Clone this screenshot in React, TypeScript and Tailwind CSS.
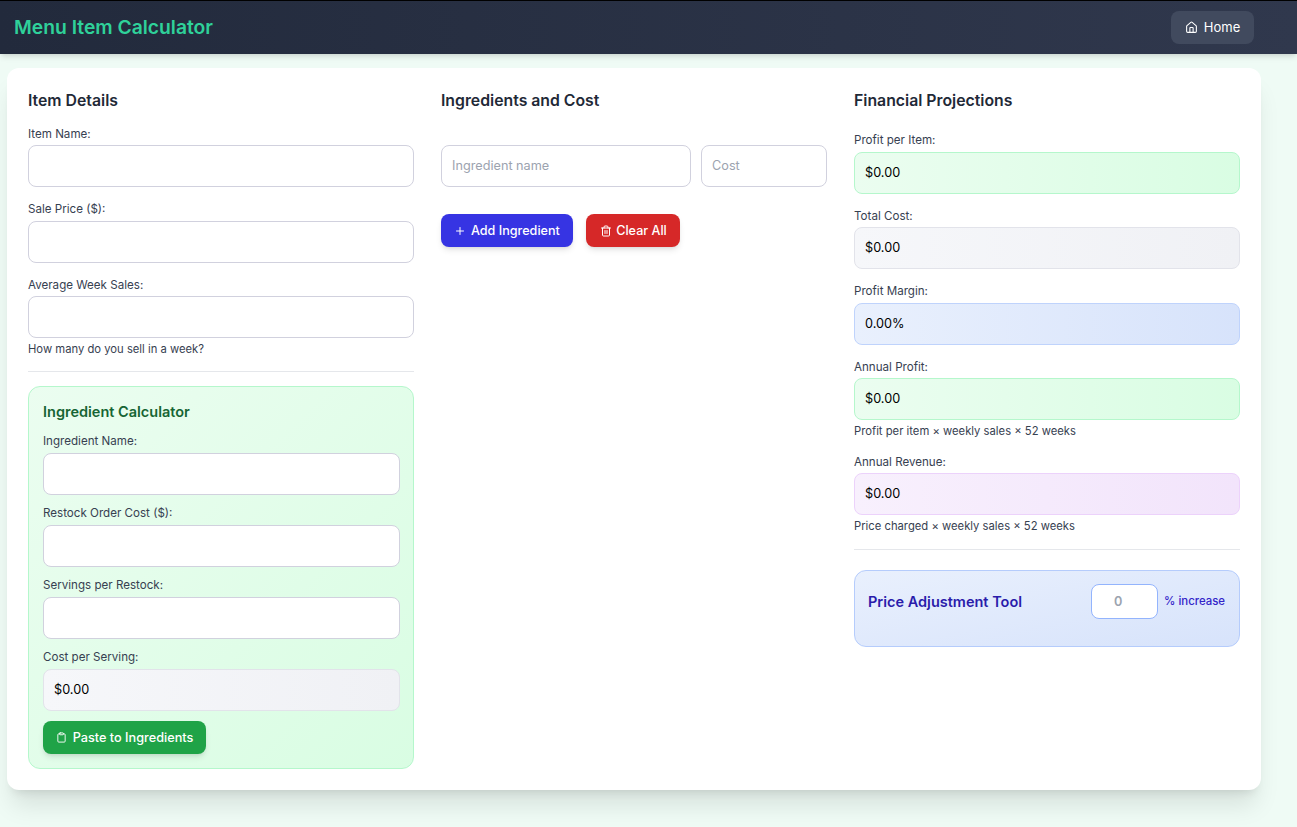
import { Clipboard, House, Plus, Trash2 } from "lucide-react";

const inputClass =
  "block w-full h-[42px] rounded-lg border border-[#d1d1de] bg-white px-[10px] pb-px text-[12.7px] text-black placeholder:text-[#9ca3af] outline-none";

function Field({ label, hint }: { label: string; hint?: string }) {
  return (
    <div>
      <label className="block h-[21.5px] text-[11.6px] leading-[21px] text-[#374151]">
        {label}
      </label>
      <input className={inputClass} />
      {hint && (
        <p className="mt-[2px] text-[11.25px] leading-[18px] text-[#374151]">{hint}</p>
      )}
    </div>
  );
}

function CalcField({ label }: { label: string }) {
  return (
    <div>
      <label className="block h-[21px] text-[11.6px] leading-[19px] text-[#374151]">
        {label}
      </label>
      <input className={inputClass} />
    </div>
  );
}

function Result({
  label,
  value,
  hint,
  boxClass,
}: {
  label: string;
  value: string;
  hint?: string;
  boxClass: string;
}) {
  return (
    <div>
      <div className="h-[21.5px] text-[11.6px] leading-[21px] text-[#374151]">
        {label}
      </div>
      <div
        className={`flex h-[42px] items-center rounded-lg border px-[10px] text-[12.7px] text-black bg-linear-to-r ${boxClass}`}
      >
        {value}
      </div>
      {hint && (
        <p className="mt-[2px] h-[17.5px] text-[11.25px] leading-[19.5px] text-[#374151]">{hint}</p>
      )}
    </div>
  );
}

export default function App() {
  return (
    <div className="min-h-[827px] bg-[#effbf5] font-[Inter,sans-serif]">
      <header className="flex h-[54px] items-center justify-between border-t border-black bg-linear-to-r from-[#222a3c] to-[#30384d] pl-[14px] pr-[43px] shadow-md">
        <h1 className="text-[19.3px] font-semibold text-[#2fd19a]">
          Menu Item Calculator
        </h1>
        <button className="flex h-[33px] w-[83px] items-center justify-center gap-[6px] rounded-lg bg-[#414a5e] text-[13px] text-white">
          <House size={13} />
          Home
        </button>
      </header>

      <main className="pl-[7px] pt-[14px] pb-[37px]">
        <div className="grid h-[722px] w-[1254px] grid-cols-3 gap-x-[27px] rounded-xl bg-white px-[21px] pt-[21px] shadow-xl">
          <section>
            <h2 className="h-[22px] mb-[12.5px] text-[15.8px] font-semibold leading-[24px] text-[#1f2937]">
              Item Details
            </h2>
            <div className="flex flex-col gap-3">
              <Field label="Item Name:" />
              <Field label="Sale Price ($):" />
              <Field label="Average Week Sales:" hint="How many do you sell in a week?" />
            </div>
            <hr className="mt-[12.5px] mb-[14px] border-[#e5e7eb]" />
            <div className="h-[383px] rounded-xl border border-[#b5f7cc] bg-linear-to-br from-[#ebfdf0] to-[#d9fde3] pl-[14px] pr-[13px] pt-[14px]">
              <h3 className="mb-[9px] text-[14.5px] font-semibold leading-[22px] text-[#166534]">
                Ingredient Calculator
              </h3>
              <div className="flex flex-col gap-[9px]">
                <CalcField label="Ingredient Name:" />
                <CalcField label="Restock Order Cost ($):" />
                <CalcField label="Servings per Restock:" />
                <div>
                  <div className="h-[21px] text-[11.6px] leading-[19px] text-[#374151]">
                    Cost per Serving:
                  </div>
                  <div className="flex h-[42px] items-center rounded-lg border border-[#e2e3ea] bg-linear-to-r from-[#f6f7fa] to-[#f0f1f5] px-[10px] text-[12.7px] text-black">
                    $0.00
                  </div>
                </div>
              </div>
              <button className="mt-[10px] flex h-[33px] w-[163px] items-center justify-center gap-[6px] rounded-lg bg-[#1fa347] pt-px text-[12.7px] font-medium text-white shadow-md">
                <Clipboard size={11} />
                Paste to Ingredients
              </button>
            </div>
          </section>

          <section>
            <h2 className="h-[22px] text-[15.8px] font-semibold leading-[24px] text-[#1f2937]">
              Ingredients and Cost
            </h2>
            <div className="mt-[34px] flex gap-[10px]">
              <input placeholder="Ingredient name" className={`${inputClass} !w-[250px]`} />
              <input placeholder="Cost" className={`${inputClass} !w-[126px]`} />
            </div>
            <div className="mt-[27px] flex gap-[13px]">
              <button className="flex h-[33px] w-[132px] items-center gap-[5px] rounded-lg bg-[#3634e3] pl-[13px] pt-px text-[12.6px] font-medium text-white shadow-md">
                <Plus size={12} />
                Add Ingredient
              </button>
              <button className="flex h-[33px] w-[94px] items-center justify-center gap-[4px] rounded-lg bg-[#d62828] pl-px pt-px text-[12.6px] font-medium text-white shadow-md">
                <Trash2 size={12} />
                Clear All
              </button>
            </div>
          </section>

          <section>
            <h2 className="h-[22px] mb-[19px] text-[15.8px] font-semibold leading-[24px] text-[#1f2937]">
              Financial Projections
            </h2>
            <div className="flex flex-col gap-3">
              <Result label="Profit per Item:" value="$0.00" boxClass="border-[#b5f7cc] from-[#ebfdf0] to-[#d9fde3]" />
              <Result label="Total Cost:" value="$0.00" boxClass="border-[#e2e3ea] from-[#f6f7fa] to-[#f0f1f5]" />
              <Result label="Profit Margin:" value="0.00%" boxClass="border-[#bfd3fc] from-[#e9f0fd] to-[#d7e3fb]" />
              <Result label="Annual Profit:" value="$0.00" hint="Profit per item × weekly sales × 52 weeks" boxClass="border-[#b5f7cc] from-[#ebfdf0] to-[#d9fde3]" />
              <Result label="Annual Revenue:" value="$0.00" hint="Price charged × weekly sales × 52 weeks" boxClass="border-[#ecd2fb] from-[#f8f0fd] to-[#f2e4fb]" />
            </div>
            <hr className="mt-[14px] mb-[20px] border-[#e5e7eb]" />
            <div className="flex h-[77px] items-start justify-between rounded-xl border border-[#b5ccfc] bg-linear-to-br from-[#e9f0fd] to-[#d7e3fb] pl-[13px] pr-[14px] pt-[13px]">
              <h3 className="mt-[7px] text-[14.5px] font-semibold leading-[22px] text-[#2a1cab]">
                Price Adjustment Tool
              </h3>
              <div className="flex items-center gap-[6px]">
                <input
                  placeholder="0"
                  className="h-[35px] w-[67px] rounded-lg border border-[#93b4fd] bg-white pr-[13px] text-center text-[12.7px] font-semibold outline-none placeholder:text-[#9ca3af]"
                />
                <span className="pt-px text-[11.4px] font-medium text-[#3324c9]">% increase</span>
              </div>
            </div>
          </section>
        </div>
      </main>
    </div>
  );
}
